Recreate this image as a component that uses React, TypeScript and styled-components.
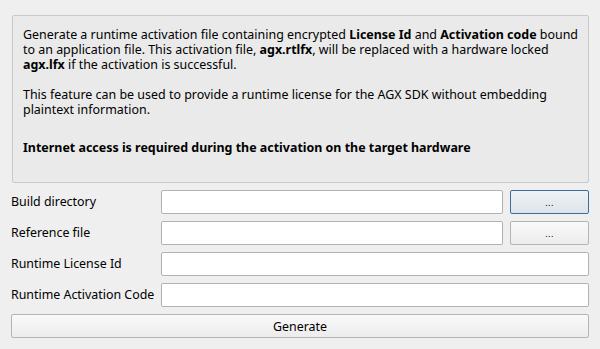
import React from "react";
import styled, { createGlobalStyle } from "styled-components";

const Global = createGlobalStyle`
  html, body { margin: 0; padding: 0; background: #efefef; }
  body { font-family: "Noto Sans", "DejaVu Sans", sans-serif; font-size: 12.4px; color: #000; }
`;

const Page = styled.div`
  width: 600px;
  height: 349px;
  box-sizing: border-box;
  padding: 15px 11px 0 11px;
  display: flex;
  flex-direction: column;
`;

const InfoBox = styled.div`
  margin-left: 1px;
  height: 168px;
  box-sizing: border-box;
  border: 1px solid #c9c9c9;
  border-radius: 2px;
  background: #eaeaea;
  padding: 11px 10px 0 10px;
  line-height: 15px;
  font-size: 12.45px;
`;

const Para = styled.p<{ $gap?: number }>`
  margin: 0 0 ${(p) => p.$gap ?? 15}px 0;
  white-space: nowrap;
`;

const Form = styled.div`
  margin-top: 7px;
  display: grid;
  grid-template-columns: 143px 1fr 79px;
  column-gap: 7px;
  row-gap: 7px;
`;

const Label = styled.label`
  grid-column: 1;
  height: 24px;
  display: flex;
  align-items: center;
  white-space: nowrap;
  padding-bottom: 1px;
  box-sizing: border-box;
`;

const Input = styled.input<{ $span?: boolean }>`
  grid-column: ${(p) => (p.$span ? "2 / 4" : "2")};
  height: 24px;
  box-sizing: border-box;
  border: 1px solid #b2b2b2;
  border-radius: 2px;
  background: #fff;
  margin: 0;
  padding: 0 4px;
  font: inherit;
  outline: none;
`;

const Button = styled.button<{ $focused?: boolean; $wide?: boolean }>`
  grid-column: ${(p) => (p.$wide ? "1 / 4" : "3")};
  height: 24px;
  box-sizing: border-box;
  margin: 0;
  padding: 0;
  font: inherit;
  color: #000;
  border-radius: 2px;
  border: 1px solid ${(p) => (p.$focused ? "#3a6f9c" : "#b4b4b4")};
  background: ${(p) =>
    p.$focused
      ? "linear-gradient(#eef2f5, #dde4e9)"
      : "linear-gradient(#f9f9f9, #ececec)"};
`;

const Ellipsis = styled.span`
  font-size: 9px;
  letter-spacing: 0.5px;
  position: relative;
  top: -1px;
`;

export default function App() {
  return (
    <>
      <Global />
      <Page>
        <InfoBox>
          <Para>
            Generate a runtime activation file containing encrypted <b>License Id</b> and <b>Activation code</b> bound
            <br />
            to an application file. This activation file, <b>agx.rtlfx</b>, will be replaced with a hardware locked
            <br />
            <b>agx.lfx</b> if the activation is successful.
          </Para>
          <Para $gap={23}>
            This feature can be used to provide a runtime license for the AGX SDK without embedding
            <br />
            plaintext information.
          </Para>
          <Para $gap={0}>
            <b>Internet access is required during the activation on the target hardware</b>
          </Para>
        </InfoBox>
        <Form>
          <Label>Build directory</Label>
          <Input />
          <Button $focused>
            <Ellipsis>...</Ellipsis>
          </Button>
          <Label>Reference file</Label>
          <Input />
          <Button>
            <Ellipsis>...</Ellipsis>
          </Button>
          <Label>Runtime License Id</Label>
          <Input $span />
          <Label>Runtime Activation Code</Label>
          <Input $span />
          <Button $wide>Generate</Button>
        </Form>
      </Page>
    </>
  );
}
